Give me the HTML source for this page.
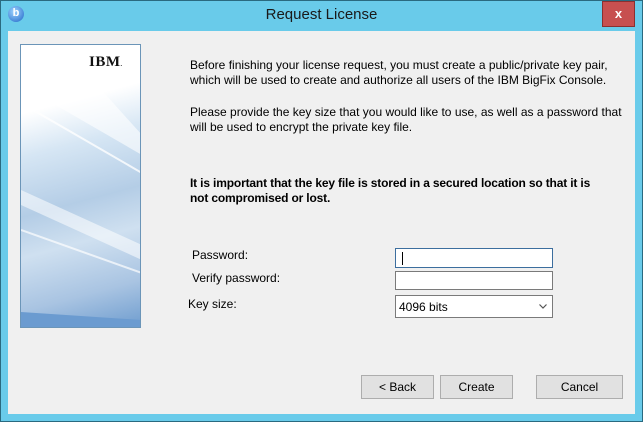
<!DOCTYPE html>
<html><head><style>
*{margin:0;padding:0;box-sizing:border-box}
body{width:643px;height:422px;background:#69cbea;position:relative;overflow:hidden;font-family:"Liberation Sans",sans-serif;font-size:12px;color:#000}
.frame{position:absolute;left:0;top:0;width:643px;height:422px;border:1px solid #2a6a80}
.title{position:absolute;left:0;top:6px;width:643px;text-align:center;font-size:15px;color:#1a1a1a}
.close{position:absolute;left:602px;top:1px;width:33px;height:26px;background:#c75050;border:1px solid #8a3030;color:#fff;font-weight:bold;text-align:center;line-height:24px;font-size:13px}
.icon{position:absolute;left:8px;top:6px;width:16px;height:16px;border-radius:50%;background:radial-gradient(circle at 40% 35%,#9fd4ff,#1e66c8);color:#fff;font-size:11px;font-weight:bold;text-align:center;line-height:15px}
.client{position:absolute;left:8px;top:31px;width:627px;height:383px;background:#f0f0f0}
.panel{position:absolute;left:20px;top:44px;width:121px;height:284px;border:1px solid #6b95b8;background:linear-gradient(165deg,#fff 0%,#fff 22%,#d6e6f4 36%,#b4cde6 55%,#cfe0f0 68%,#a9c4e2 85%,#6f9dcf 100%);overflow:hidden}
.t{position:absolute;white-space:nowrap;line-height:15px}
.inp{position:absolute;background:#fff;border:1px solid #7a7a7a}
.btn{position:absolute;background:#e1e1e1;border:1px solid #adadad;text-align:center;line-height:23px}
</style></head><body>
<div class="frame"></div>
<div class="icon">b</div>
<div class="title">Request License</div>
<div class="close">x</div>
<div class="client"></div>
<div class="panel">
<svg width="121" height="284" style="position:absolute;left:0;top:0">
<polygon points="0,0 40,0 121,90 121,110 0,40" fill="#fff" opacity="0.6"/>
<line x1="0" y1="58" x2="121" y2="128" stroke="#fff" stroke-width="2" opacity="0.8"/>
<polygon points="0,145 121,200 121,215 0,160" fill="#fff" opacity="0.55"/>
<line x1="0" y1="185" x2="121" y2="228" stroke="#fff" stroke-width="2" opacity="0.7"/>
<polygon points="0,267 121,275 121,284 0,284" fill="#6b9bd0"/>
</svg>
<div style="position:absolute;left:68px;top:9px;font-family:'Liberation Serif',serif;font-weight:bold;font-size:15px;letter-spacing:0.5px;color:#111">IBM<span style="font-size:6px">.</span></div>
</div>
<div class="t" style="left:190px;top:58px">Before finishing your license request, you must create a public/private key pair,</div>
<div class="t" style="left:190px;top:73px">which will be used to create and authorize all users of the IBM BigFix Console.</div>
<div class="t" style="left:190px;top:105px">Please provide the key size that you would like to use, as well as a password that</div>
<div class="t" style="left:190px;top:120px">will be used to encrypt the private key file.</div>
<div class="t" style="left:190px;top:176px;font-weight:bold;letter-spacing:-0.16px">It is important that the key file is stored in a secured location so that it is</div>
<div class="t" style="left:190px;top:191px;font-weight:bold;letter-spacing:-0.16px">not compromised or lost.</div>
<div class="t" style="left:192px;top:248px">Password:</div>
<div class="t" style="left:192px;top:271px">Verify password:</div>
<div class="t" style="left:188px;top:297px">Key size:</div>
<div class="inp" style="left:395px;top:248px;width:158px;height:20px;border-color:#3c6e9e"><div style="position:absolute;left:6px;top:3px;width:1px;height:13px;background:#000"></div></div>
<div class="inp" style="left:395px;top:271px;width:158px;height:19px"></div>
<div class="inp" style="left:395px;top:295px;width:158px;height:23px"><span style="position:absolute;left:3px;top:4px">4096 bits</span><svg style="position:absolute;right:5px;top:8px" width="8" height="5"><path d="M0.5 0.5 L4 4 L7.5 0.5" fill="none" stroke="#555" stroke-width="1.2"/></svg></div>
<div class="btn" style="left:361px;top:375px;width:73px;height:24px">&lt; Back</div>
<div class="btn" style="left:440px;top:375px;width:73px;height:24px">Create</div>
<div class="btn" style="left:536px;top:375px;width:87px;height:24px">Cancel</div>
</body></html>
